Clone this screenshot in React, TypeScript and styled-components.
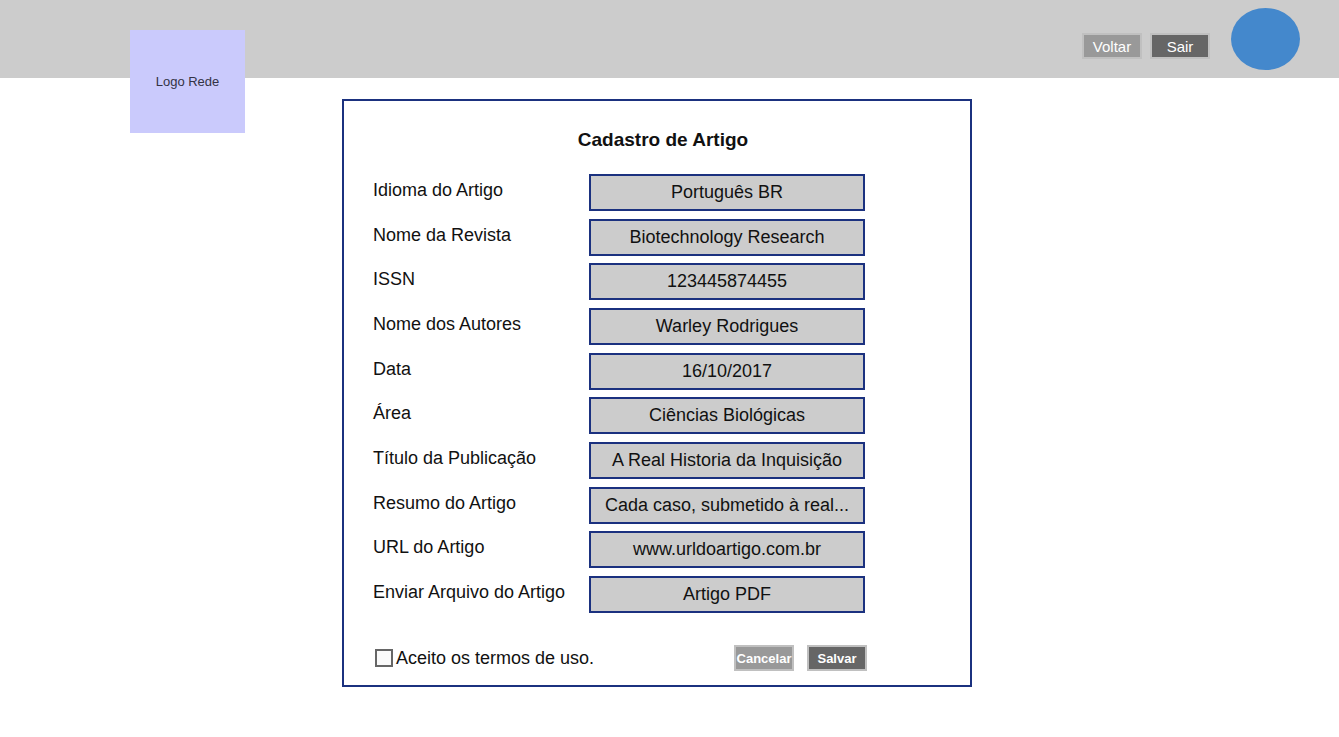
import React from "react";
import styled, { createGlobalStyle } from "styled-components";

const GlobalStyle = createGlobalStyle`
  * { box-sizing: border-box; }
  body {
    margin: 0;
    background: #ffffff;
    color: #111111;
    font-family: "Liberation Sans", Arial, sans-serif;
  }
`;

const Header = styled.header`
  display: flex;
  justify-content: space-between;
  align-items: flex-start;
  height: 78px;
  padding: 0 39px 0 130px;
  background: #cccccc;
`;

const Logo = styled.div`
  display: flex;
  align-items: center;
  justify-content: center;
  width: 115px;
  height: 103px;
  margin-top: 30px;
  background: #cacafc;
  color: #333344;
  font-size: 13px;
`;

const HeaderActions = styled.nav`
  display: flex;
  gap: 21px;
  padding-top: 8px;
`;

const ButtonGroup = styled.div<{ $gap: number }>`
  display: flex;
  align-self: center;
  gap: ${({ $gap }) => $gap}px;
`;

const HeaderButtons = styled(ButtonGroup)`
  align-self: flex-start;
  padding-top: 25px;
`;

const Button = styled.button<{ $dark?: boolean; $bold?: boolean }>`
  width: 60px;
  height: 26px;
  padding: 2px 0 0;
  border: 2px solid #c0c0c0;
  background: ${({ $dark }) => ($dark ? "#666666" : "#999999")};
  color: #ffffff;
  font-family: inherit;
  font-size: ${({ $bold }) => ($bold ? 13 : 15)}px;
  font-weight: ${({ $bold }) => ($bold ? 700 : 400)};
  line-height: 20px;
  white-space: nowrap;
  cursor: pointer;
`;

const Avatar = styled.div`
  width: 69px;
  height: 62px;
  border-radius: 50%;
  background: #4488cc;
`;

const Main = styled.main`
  display: flex;
  justify-content: center;
  padding: 21px 25px 50px 0;
`;

const Panel = styled.form`
  width: 630px;
  padding: 28px 0 14px;
  border: 2px solid #1b317f;
`;

const Title = styled.h1`
  margin: 0 0 23px;
  padding-left: 12px;
  font-size: 19px;
  line-height: 22px;
  text-align: center;
`;

const Fields = styled.div`
  display: flex;
  flex-direction: column;
  justify-content: space-between;
  min-height: 439px;
  padding-left: 29px;
`;

const Field = styled.div`
  display: grid;
  grid-template-columns: 216px 276px;
  align-items: center;
`;

const Label = styled.label`
  padding-bottom: 5px;
  font-size: 18px;
  line-height: 22px;
`;

const Input = styled.input`
  width: 100%;
  height: 37px;
  padding: 0 8px;
  border: 2px solid #1b317f;
  border-radius: 0;
  background: #cccccc;
  color: #111111;
  font-family: inherit;
  font-size: 18px;
  text-align: center;
`;

const Footer = styled.div`
  display: flex;
  justify-content: space-between;
  align-items: center;
  margin-top: 32px;
  padding: 0 103px 0 31px;
`;

const Terms = styled.label`
  display: flex;
  align-items: center;
  gap: 3px;
  font-size: 18px;
  line-height: 22px;
`;

const Checkbox = styled.input`
  appearance: none;
  width: 18px;
  height: 18px;
  margin: 0;
  border: 2px solid #666666;
  background: #fafafa;

  &:checked {
    background: #666666;
  }
`;

const fields = [
  { id: "idioma", label: "Idioma do Artigo", value: "Português BR" },
  { id: "revista", label: "Nome da Revista", value: "Biotechnology Research" },
  { id: "issn", label: "ISSN", value: "123445874455" },
  { id: "autores", label: "Nome dos Autores", value: "Warley Rodrigues" },
  { id: "data", label: "Data", value: "16/10/2017" },
  { id: "area", label: "Área", value: "Ciências Biológicas" },
  { id: "titulo", label: "Título da Publicação", value: "A Real Historia da Inquisição" },
  { id: "resumo", label: "Resumo do Artigo", value: "Cada caso, submetido à real..." },
  { id: "url", label: "URL do Artigo", value: "www.urldoartigo.com.br" },
  { id: "arquivo", label: "Enviar Arquivo do Artigo", value: "Artigo PDF" },
];

export default function App() {
  return (
    <>
      <GlobalStyle />
      <Header>
        <Logo>Logo Rede</Logo>
        <HeaderActions>
          <HeaderButtons $gap={8}>
            <Button type="button">Voltar</Button>
            <Button type="button" $dark>Sair</Button>
          </HeaderButtons>
          <Avatar />
        </HeaderActions>
      </Header>
      <Main>
        <Panel onSubmit={(event) => event.preventDefault()}>
          <Title>Cadastro de Artigo</Title>
          <Fields>
            {fields.map(({ id, label, value }) => (
              <Field key={id}>
                <Label htmlFor={id}>{label}</Label>
                <Input id={id} name={id} type="text" defaultValue={value} />
              </Field>
            ))}
          </Fields>
          <Footer>
            <Terms>
              <Checkbox type="checkbox" name="termos" />
              Aceito os termos de uso.
            </Terms>
            <ButtonGroup $gap={13}>
              <Button type="button" $bold>Cancelar</Button>
              <Button type="submit" $bold $dark>Salvar</Button>
            </ButtonGroup>
          </Footer>
        </Panel>
      </Main>
    </>
  );
}
